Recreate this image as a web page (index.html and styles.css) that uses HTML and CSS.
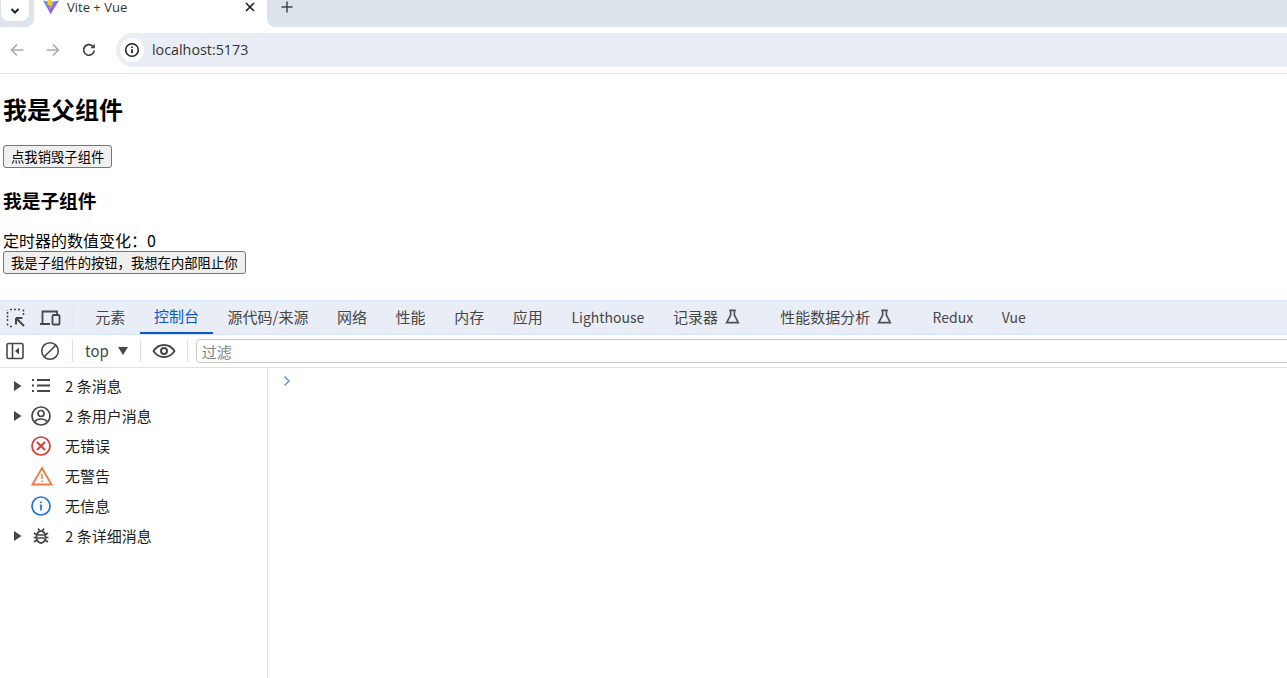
FILE: index.html
```html
<!DOCTYPE html>
<html lang="zh">
<head>
<meta charset="utf-8">
<title>Vite + Vue</title>
<link rel="stylesheet" href="styles.css">
</head>
<body>
<div class="tabstrip">
  <div class="tab-search">
    <svg width="12" height="12" viewBox="0 0 12 12"><path d="M2.500 4 6 7.500 9.500 4" fill="none" stroke="#1f1f1f" stroke-width="2"/></svg>
  </div>
  <div class="tab">
    <svg class="favicon" width="16" height="16" viewBox="0 0 16 16">
      <defs>
        <linearGradient id="vitepurple" x1="0" y1="0" x2="1" y2="1"><stop offset="0" stop-color="#41a5ff"/><stop offset="1" stop-color="#bd34fe"/></linearGradient>
        <linearGradient id="viteyellow" x1="0" y1="0" x2="0" y2="1"><stop offset="0" stop-color="#ffdd35"/><stop offset="1" stop-color="#ffa800"/></linearGradient>
      </defs>
      <path d="M0 1.500 7.600 15 16 1.500 8 3Z" fill="url(#vitepurple)"/>
      <path d="M4.500 0 9.800 0 8.200 4 10.500 3.600 6.500 11 7 6 4.500 6.600Z" fill="url(#viteyellow)"/>
    </svg>
    <span class="tab-title">Vite + Vue</span>
    <svg class="tab-close" width="10" height="10" viewBox="0 0 10 10"><path d="M1 1 9 9M9 1 1 9" stroke="#1f1f1f" stroke-width="1.600"/></svg>
  </div>
  <svg class="new-tab" width="12" height="12" viewBox="0 0 12 12"><path d="M6 .5v11M.5 6h11" stroke="#444" stroke-width="1.500"/></svg>
</div>

<div class="toolbar">
  <svg class="nav" width="16" height="16" viewBox="0 0 16 16"><path d="M14.500 8H2.500M8 2.500 2.500 8 8 13.500" fill="none" stroke="#a8abb0" stroke-width="1.600"/></svg>
  <svg class="nav" width="16" height="16" viewBox="0 0 16 16"><path d="M1.500 8h12M8 2.500 13.500 8 8 13.500" fill="none" stroke="#a8abb0" stroke-width="1.600"/></svg>
  <svg class="nav" width="16" height="16" viewBox="0 0 16 16"><path d="M13.200 8.500A5.300 5.300 0 1 1 11.500 4" fill="none" stroke="#3c3c3c" stroke-width="1.700"/><path d="M13.800 1.800v4.400H9.400Z" fill="#3c3c3c"/></svg>
  <div class="omnibox">
    <span class="site-info">
      <svg width="16" height="16" viewBox="0 0 16 16"><circle cx="8" cy="8" r="6.300" fill="none" stroke="#1f1f1f" stroke-width="1.500"/><path d="M8 7.200v4M8 4.500v1.500" stroke="#1f1f1f" stroke-width="1.700"/></svg>
    </span>
    <span class="url">localhost:5173</span>
  </div>
</div>

<main class="page">
  <h1>我是父组件</h1>
  <button class="demo-btn">点我销毁子组件</button>
  <h2>我是子组件</h2>
  <div class="timer">定时器的数值变化：0</div>
  <button class="demo-btn">我是子组件的按钮，我想在内部阻止你</button>
</main>

<section class="devtools">
  <div class="dt-tabs">
    <svg class="dt-icon first" width="20" height="20" viewBox="0 0 20 20"><path d="M1.500 13V2M4 1.500h2M8 1.500h2M12 1.500h2M17.500 1.500V8M1.500 15.500V18M4 18.500h3" fill="none" stroke="#474747" stroke-width="1.500" stroke-dasharray="2 1.500"/><path d="M10 10h6.500M10 10v6.500M10 10l8 8" fill="none" stroke="#474747" stroke-width="2"/></svg>
    <svg class="dt-icon" width="22" height="18" viewBox="0 0 22 18"><path d="M3.500 14V2.500H18V5M1 15h10" fill="none" stroke="#474747" stroke-width="1.800"/><rect x="13.500" y="6" width="7" height="9.500" rx="1" fill="none" stroke="#474747" stroke-width="1.800"/></svg>
    <span class="sep"></span>
    <span class="dt-tab">元素</span>
    <span class="dt-tab active">控制台</span>
    <span class="dt-tab">源代码/来源</span>
    <span class="dt-tab">网络</span>
    <span class="dt-tab">性能</span>
    <span class="dt-tab">内存</span>
    <span class="dt-tab">应用</span>
    <span class="dt-tab latin">Lighthouse</span>
    <span class="dt-tab exp">记录器
      <svg width="15" height="15" viewBox="0 0 16 16"><path d="M4.500 1.500h7M6 1.500v5L1.800 14.500h12.400L10 6.500v-5" fill="none" stroke="#505050" stroke-width="1.800"/></svg>
    </span>
    <span class="dt-tab exp">性能数据分析
      <svg width="15" height="15" viewBox="0 0 16 16"><path d="M4.500 1.500h7M6 1.500v5L1.800 14.500h12.400L10 6.500v-5" fill="none" stroke="#505050" stroke-width="1.800"/></svg>
    </span>
    <span class="dt-tab latin">Redux</span>
    <span class="dt-tab latin">Vue</span>
  </div>
  <div class="dt-filter">
    <svg class="ft-sidebar" width="18" height="18" viewBox="0 0 18 18"><rect x="1" y="1.500" width="16" height="15" rx="1.500" fill="none" stroke="#474747" stroke-width="1.600"/><path d="M6.500 2v14" stroke="#474747" stroke-width="1.600"/><path d="M13 5.500v7L9 9Z" fill="#474747"/></svg>
    <svg class="ft-clear" width="20" height="20" viewBox="0 0 20 20"><circle cx="10" cy="10" r="8.300" fill="none" stroke="#474747" stroke-width="1.600"/><path d="M4 16 16 4" stroke="#474747" stroke-width="1.600"/></svg>
    <span class="sep"></span>
    <span class="ctx">top</span>
    <svg class="ctx-arrow" width="10" height="8" viewBox="0 0 10 8"><path d="M0 0h10L5 8Z" fill="#474747"/></svg>
    <span class="sep"></span>
    <svg class="ft-eye" width="24" height="16" viewBox="0 0 24 16"><path d="M1.500 8C4 4 8 2 12 2s8 2 10.500 6C20 12 16 14 12 14S4 12 1.500 8Z" fill="none" stroke="#474747" stroke-width="1.800"/><circle cx="12" cy="8" r="3" fill="none" stroke="#474747" stroke-width="2"/></svg>
    <span class="sep"></span>
    <div class="filter-input">过滤</div>
  </div>
  <div class="dt-body">
    <aside class="dt-side">
      <div class="side-row">
        <svg class="caret" width="8" height="10" viewBox="0 0 8 10"><path d="M0 0 7.500 5 0 10Z" fill="#474747"/></svg>
        <svg class="side-icon" width="20" height="20" viewBox="0 0 20 20"><path d="M6 4h13M6 9.500h13M6 15h13M1 4h2M1 9.500h2M1 15h2" stroke="#474747" stroke-width="2"/></svg>
        <span>2 条消息</span>
      </div>
      <div class="side-row">
        <svg class="caret" width="8" height="10" viewBox="0 0 8 10"><path d="M0 0 7.500 5 0 10Z" fill="#474747"/></svg>
        <svg class="side-icon" width="20" height="20" viewBox="0 0 20 20"><circle cx="10" cy="10" r="9" fill="none" stroke="#474747" stroke-width="1.700"/><circle cx="10" cy="7.500" r="3" fill="none" stroke="#474747" stroke-width="1.700"/><path d="M4 15.500c1.500-2 3.500-2.500 6-2.500s4.500.5 6 2.500" fill="none" stroke="#474747" stroke-width="1.700"/></svg>
        <span>2 条用户消息</span>
      </div>
      <div class="side-row no-caret">
        <svg class="side-icon" width="20" height="20" viewBox="0 0 20 20"><circle cx="10" cy="10" r="9" fill="none" stroke="#dc362e" stroke-width="1.700"/><path d="M6 6l8 8M14 6l-8 8" stroke="#dc362e" stroke-width="1.800"/></svg>
        <span>无错误</span>
      </div>
      <div class="side-row no-caret">
        <svg class="side-icon wide" width="22" height="20" viewBox="0 0 22 20"><path d="M11 2 20.500 18.500H1.500Z" fill="none" stroke="#ee7a3c" stroke-width="1.800"/><path d="M11 8v5M11 14.500v1.500" stroke="#ee7a3c" stroke-width="1.500"/></svg>
        <span>无警告</span>
      </div>
      <div class="side-row no-caret">
        <svg class="side-icon" width="20" height="20" viewBox="0 0 20 20"><circle cx="10" cy="10" r="9" fill="none" stroke="#1a73e8" stroke-width="1.700"/><path d="M10 8.500v6M10 5.500v1.500" stroke="#1a73e8" stroke-width="1.700"/></svg>
        <span>无信息</span>
      </div>
      <div class="side-row">
        <svg class="caret" width="8" height="10" viewBox="0 0 8 10"><path d="M0 0 7.500 5 0 10Z" fill="#474747"/></svg>
        <svg class="side-icon" width="20" height="20" viewBox="0 0 20 20"><ellipse cx="10" cy="11" rx="4.500" ry="6" fill="none" stroke="#474747" stroke-width="2"/><path d="M7 9h6M7 12h6M3 7l3 2M17 7l-3 2M2.500 11.500h3M17.500 11.500h-3M3 16l3-2M17 16l-3-2M7 2.500l1.500 2M13 2.500l-1.500 2" stroke="#474747" stroke-width="1.700"/></svg>
        <span>2 条详细消息</span>
      </div>
    </aside>
    <div class="dt-console">
      <svg width="8" height="10" viewBox="0 0 8 10"><path d="M1.500 .5 6 5 1.500 9.500" fill="none" stroke="#4a8ff0" stroke-width="1.300"/></svg>
    </div>
  </div>
</section>
</body>
</html>
```
FILE: styles.css
```css
* { box-sizing: border-box; }
html, body { height: 100%; }
body {
  margin: 0;
  width: 1287px;
  height: 678px;
  overflow: hidden;
  display: flex;
  flex-direction: column;
  background: #fff;
  font-family: "Noto Sans CJK SC", "Noto Sans", sans-serif;
}
svg { display: block; flex: none; }

/* Browser chrome */
.tabstrip {
  height: 27px;
  flex: none;
  display: flex;
  align-items: flex-start;
  background: #dde3ea;
}
.tab-search {
  width: 28px;
  height: 21px;
  margin-left: 1px;
  background: #fff;
  border-radius: 0 0 8px 8px;
  display: flex;
  align-items: center;
  justify-content: center;
}
.tab {
  position: relative;
  width: 233px;
  height: 27px;
  padding: 0 12px 13px 9px;
  margin-left: 5px;
  background: #fff;
  display: flex;
  align-items: center;
}
.tab::before,
.tab::after {
  content: "";
  position: absolute;
  bottom: 0;
  width: 8px;
  height: 8px;
}
.tab::before {
  left: -8px;
  background: radial-gradient(circle at 0 0, #dde3ea 7.500px, #fff 8px);
}
.tab::after {
  right: -8px;
  background: radial-gradient(circle at 100% 0, #dde3ea 7.500px, #fff 8px);
}
.tab-title {
  margin-left: 8px;
  flex: 1;
  font: 13px "Open Sans", sans-serif;
  color: #333;
}
.new-tab { margin: 1px 0 0 14px; }

.toolbar {
  height: 47px;
  flex: none;
  display: flex;
  align-items: center;
  padding: 0 0 0 9px;
  gap: 20px;
  background: #fff;
  border-bottom: 1px solid #e6e6e6;
}
.omnibox {
  flex: 1;
  height: 34px;
  margin-left: -1px;
  background: #e9edf5;
  border-radius: 17px 0 0 17px;
  display: flex;
  align-items: center;
  padding-left: 4px;
}
.site-info {
  width: 24px;
  height: 24px;
  border-radius: 50%;
  background: #fff;
  display: flex;
  align-items: center;
  justify-content: center;
}
.url {
  margin-left: 8px;
  padding-bottom: 2px;
  font: 14.3px "Open Sans", sans-serif;
  color: #333;
}

/* Page */
.page {
  height: 226px;
  flex: none;
  padding: 0 3px;
  color: #000;
}
.page h1 {
  font-size: 24px;
  line-height: 36px;
  margin: 17px 0 18px;
  font-weight: 700;
}
.page h2 {
  font-size: 18.72px;
  line-height: 27px;
  margin: 18px 0 18px;
  font-weight: 700;
}
.demo-btn {
  display: block;
  height: 23px;
  padding: 0 7px;
  font-family: inherit;
  font-size: 13.333px;
  line-height: 18px;
  color: #000;
  background: #efefef;
  border: 1px solid #767676;
  border-radius: 3px;
}
.timer {
  font-size: 16px;
  line-height: 19px;
  margin-bottom: 1px;
}

/* DevTools */
.devtools {
  flex: 1;
  min-height: 0;
  display: flex;
  flex-direction: column;
  border-top: 1px solid #d3e3fd;
}
.dt-tabs {
  height: 34px;
  flex: none;
  display: flex;
  align-items: center;
  background: #e9edf6;
  border-bottom: 1px solid #d3e3fd;
  font-size: 15px;
  color: #474747;
}
.dt-tabs .dt-icon.first { margin-left: 6px; }
.dt-tabs .dt-icon + .dt-icon { margin-left: 13px; }
.sep {
  width: 1px;
  height: 22px;
  background: #d3e3fd;
  flex: none;
}
.dt-tabs .sep { margin: 0 7px 0 12px; }
.dt-tab {
  height: 33px;
  padding: 0 14.300px 2px;
  display: flex;
  align-items: center;
  gap: 7px;
  white-space: nowrap;
}
.dt-tab.latin { font-size: 14px; }
.dt-tab.exp { padding-right: 26px; }
.dt-tab.active {
  color: #0b57d0;
  border-bottom: 2px solid #0b57d0;
}
.dt-filter {
  height: 33px;
  flex: none;
  display: flex;
  align-items: center;
  border-bottom: 1px solid #d3e3fd;
  font-size: 15px;
  color: #474747;
}
.ft-sidebar { margin-left: 6px; }
.ft-clear { margin-left: 16px; }
.dt-filter .sep:first-of-type { margin-left: 12px; }
.ctx { margin-left: 12px; padding-bottom: 1px; }
.ctx-arrow { margin: 0 12px 0 9px; }
.ft-eye { margin: 0 11px; }
.filter-input {
  flex: 1;
  height: 24px;
  margin: 0 -20px 0 8px;
  padding-left: 5px;
  line-height: 23px;
  color: #80868b;
  background: #fff;
  border: 1px solid #c7c7c7;
  border-radius: 4px;
}
.dt-body {
  flex: 1;
  min-height: 0;
  display: flex;
}
.dt-side {
  width: 268px;
  flex: none;
  padding-top: 3px;
  border-right: 1px solid #d3e3fd;
}
.side-row {
  height: 30px;
  display: flex;
  align-items: center;
  padding-left: 14px;
  font-size: 15px;
  color: #1f1f1f;
}
.side-row span { padding-bottom: 2px; }
.side-row.no-caret { padding-left: 31px; }
.caret { margin-right: 9px; }
.side-icon { margin-right: 14px; }
.side-icon.wide { margin-right: 12px; }
.dt-console { flex: 1; padding: 8px 0 0 15px; }
```
